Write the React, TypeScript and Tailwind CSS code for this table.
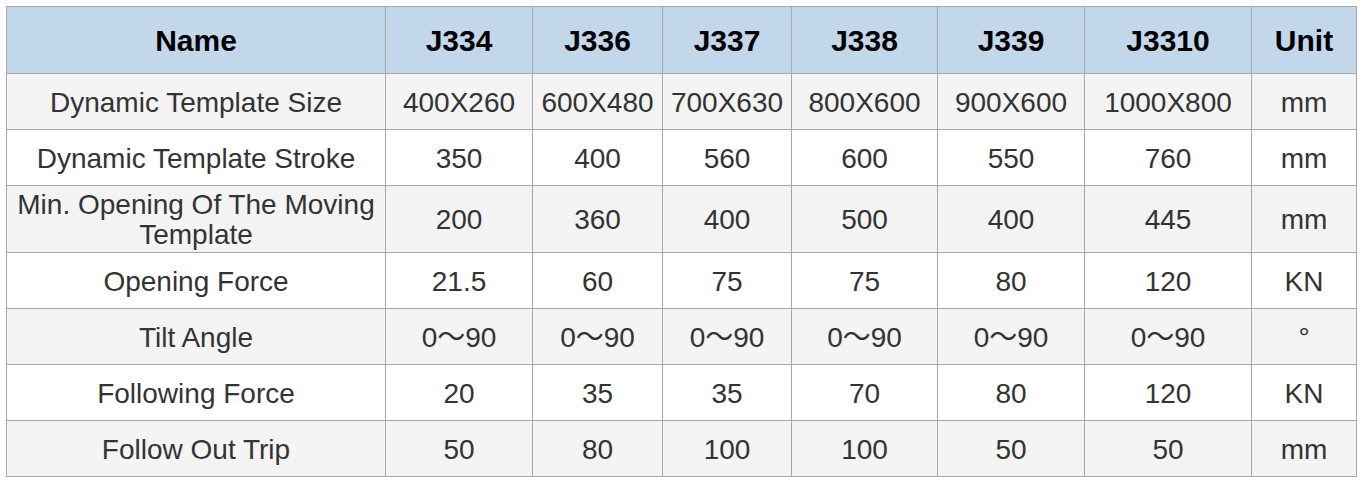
import React from "react";

const headers = ["Name", "J334", "J336", "J337", "J338", "J339", "J3310", "Unit"];

const rows: { cells: string[]; tall?: boolean }[] = [
  { cells: ["Dynamic Template Size", "400X260", "600X480", "700X630", "800X600", "900X600", "1000X800", "mm"] },
  { cells: ["Dynamic Template Stroke", "350", "400", "560", "600", "550", "760", "mm"] },
  { cells: ["Min. Opening Of The Moving Template", "200", "360", "400", "500", "400", "445", "mm"], tall: true },
  { cells: ["Opening Force", "21.5", "60", "75", "75", "80", "120", "KN"] },
  { cells: ["Tilt Angle", "0～90", "0～90", "0～90", "0～90", "0～90", "0～90", "°"] },
  { cells: ["Following Force", "20", "35", "35", "70", "80", "120", "KN"] },
  { cells: ["Follow Out Trip", "50", "80", "100", "100", "50", "50", "mm"] },
];

export default function App() {
  return (
    <div className="w-[1364px] h-[484px] bg-white p-[6px]" style={{ fontFamily: '"Liberation Sans", Arial, "Noto Sans CJK SC", sans-serif' }}>
      <div className="grid w-[1351px] grid-cols-[378px_146px_129px_128px_145px_146px_166px_104px] grid-rows-[66px_55px_55px_66px_55px_55px_55px_55px] gap-px bg-[#a8a8a8] p-px">
        {headers.map((h) => (
          <div key={h} className="flex items-center justify-center bg-[#c3d7eb] text-[30px] font-bold text-black">
            {h}
          </div>
        ))}
        {rows.map((r, i) =>
          r.cells.map((c, j) => (
            <div
              key={`${i}-${j}`}
              className={`flex items-center justify-center px-1 pt-[2px] text-center text-[28px] leading-[30px] text-[#333333] ${i % 2 === 0 ? "bg-[#f4f4f4]" : "bg-white"}`}
            >
              {c}
            </div>
          ))
        )}
      </div>
    </div>
  );
}
